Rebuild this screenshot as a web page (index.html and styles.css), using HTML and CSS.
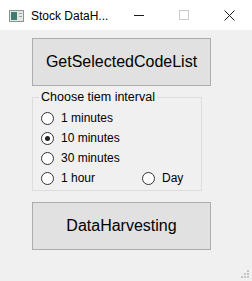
FILE: index.html
```html
<!DOCTYPE html>
<html lang="en">
<head>
    <meta charset="UTF-8">
    <meta name="viewport" content="width=device-width, initial-scale=1.0">
    <title>Stock DataHarvesting</title>
    <link rel="stylesheet" href="styles.css">
</head>
<body>
    <div class="ventana">
        <!-- Barra de titulo -->
        <div class="titlebar">
            <svg class="app-icon" width="15" height="12" viewBox="0 0 15 12">
                <rect x="0.5" y="0.5" width="14" height="11" fill="#e4e8e6" stroke="#8c9490"/>
                <rect x="2" y="2" width="6" height="8" fill="#3f7d72"/>
                <rect x="10" y="3" width="3" height="1" fill="#9aa5a0"/>
                <rect x="10" y="6" width="3" height="1" fill="#9aa5a0"/>
            </svg>
            <span class="title">Stock DataH...</span>
            <div class="controls">
                <span class="ctl ctl-min">
                    <svg width="10" height="10" viewBox="0 0 10 10"><rect x="0" y="5" width="10" height="1" fill="#1a1a1a"/></svg>
                </span>
                <span class="ctl ctl-max">
                    <svg width="10" height="10" viewBox="0 0 10 10"><rect x="0.5" y="0.5" width="9" height="9" fill="none" stroke="#cccccc"/></svg>
                </span>
                <span class="ctl ctl-close">
                    <svg width="11" height="11" viewBox="0 0 11 11"><path d="M0.5 0.5 L10.5 10.5 M10.5 0.5 L0.5 10.5" stroke="#1a1a1a" stroke-width="1"/></svg>
                </span>
            </div>
        </div>

        <!-- Contenido -->
        <div class="contenido">
            <button class="btn">GetSelectedCodeList</button>

            <fieldset class="grupo">
                <legend>Choose tiem interval</legend>
                <div class="opciones">
                    <label class="radio"><span class="circulo"></span>1 minutes</label>
                    <label class="radio"><span class="circulo marcado"></span>10 minutes</label>
                    <label class="radio"><span class="circulo"></span>30 minutes</label>
                    <div class="fila">
                        <label class="radio col-1"><span class="circulo"></span>1 hour</label>
                        <label class="radio"><span class="circulo"></span>Day</label>
                    </div>
                </div>
            </fieldset>

            <button class="btn btn-2">DataHarvesting</button>
        </div>

        <svg class="grip" width="10" height="10" viewBox="0 0 10 10">
            <rect x="7" y="1" width="2" height="2" fill="#c4c4c4"/>
            <rect x="4" y="4" width="2" height="2" fill="#c4c4c4"/>
            <rect x="7" y="4" width="2" height="2" fill="#c4c4c4"/>
            <rect x="1" y="7" width="2" height="2" fill="#c4c4c4"/>
            <rect x="4" y="7" width="2" height="2" fill="#c4c4c4"/>
            <rect x="7" y="7" width="2" height="2" fill="#c4c4c4"/>
        </svg>
    </div>
</body>
</html>
```

FILE: styles.css
```css
body {
    margin: 0;
    padding: 0;
    font-family: "Liberation Sans", Arial, sans-serif;
    background-color: #f0f0f0;
}
.ventana {
    width: 252px;
    height: 281px;
    position: relative;
    background-color: #f0f0f0;
    overflow: hidden;
}
.titlebar {
    height: 30px;
    background-color: #ffffff;
    display: flex;
    align-items: center;
}
.app-icon {
    margin-left: 9px;
    margin-top: 1px;
}
.title {
    margin-left: 7px;
    font-size: 12px;
    color: #000;
    margin-top: 1px;
}
.controls {
    margin-left: auto;
    display: flex;
    height: 30px;
}
.ctl {
    display: flex;
    align-items: center;
    justify-content: center;
    width: 45px;
    height: 30px;
}
.ctl-min svg {
    margin-top: -1px;
}
.ctl-close {
    width: 46px;
}
.contenido {
    padding: 8px 0 0 32px;
    display: flex;
    flex-direction: column;
    align-items: flex-start;
}
.btn {
    width: 179px;
    height: 48px;
    background-color: #e1e1e1;
    border: 1px solid #adadad;
    border-radius: 0;
    font-family: "Liberation Sans", Arial, sans-serif;
    font-size: 16px;
    color: #000;
    padding: 0;
    margin: 0;
}
.btn-2 {
    margin-top: 11px;
}
.grupo {
    margin: 4px 0 0 0;
    width: 170px;
    box-sizing: border-box;
    border: 1px solid #dcdcdc;
    padding: 4px 0 2px 8px;
}
.grupo legend {
    font-size: 12.5px;
    line-height: 14px;
    padding: 0 2px;
    margin-left: -2px;
    color: #000;
}
.opciones {
    display: flex;
    flex-direction: column;
}
.radio {
    display: flex;
    align-items: center;
    height: 20px;
    font-size: 12px;
    color: #000;
}
.fila {
    display: flex;
}
.col-1 {
    width: 101px;
}
.circulo {
    width: 13px;
    height: 13px;
    box-sizing: border-box;
    border: 1px solid #333;
    border-radius: 50%;
    background-color: #fff;
    margin-right: 7px;
    display: flex;
    align-items: center;
    justify-content: center;
}
.circulo.marcado::after {
    content: "";
    width: 5px;
    height: 5px;
    border-radius: 50%;
    background-color: #222;
}
.grip {
    position: absolute;
    right: 2px;
    bottom: 2px;
}
```
